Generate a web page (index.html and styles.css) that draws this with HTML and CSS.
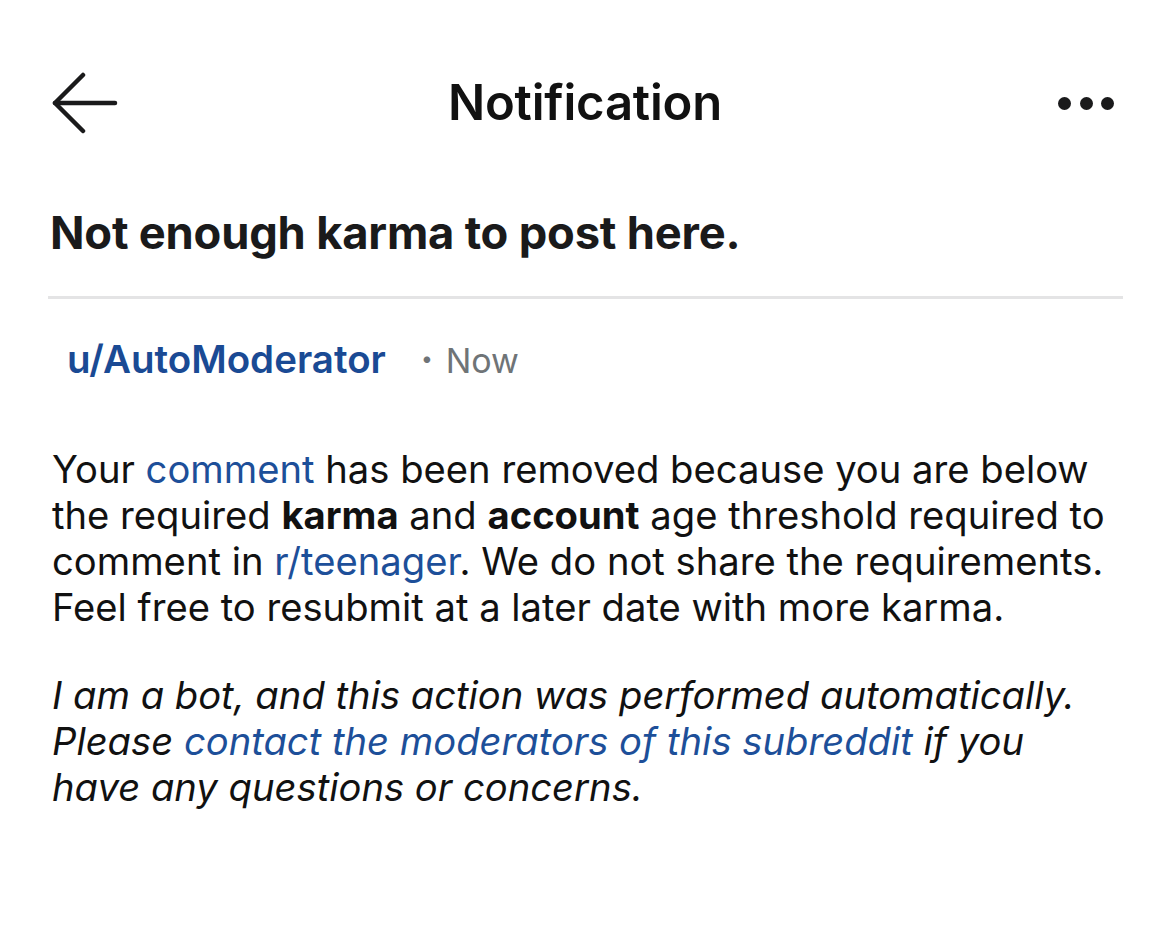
FILE: index.html
```html
<!DOCTYPE html>
<html>
<head>
<meta charset="utf-8">
<link rel="stylesheet" href="styles.css">
</head>
<body>
<div class="page">
  <header class="topbar">
    <button class="icon-btn back" aria-label="Back">
      <svg width="66" height="62" viewBox="0 0 66 62" fill="none" stroke="#1a1a1b" stroke-width="4.5" stroke-linecap="round" stroke-linejoin="round">
        <path d="M31 3 L3 31 L31 59"/>
        <path d="M3 31 H63"/>
      </svg>
    </button>
    <h1 class="title">Notification</h1>
    <button class="icon-btn more" aria-label="More">
      <span class="dot"></span><span class="dot"></span><span class="dot"></span>
    </button>
  </header>
  <h2 class="subject">Not enough karma to post here.</h2>
  <hr class="divider">
  <div class="meta">
    <span class="author">u/AutoModerator</span>
    <span class="sep">•</span>
    <span class="time">Now</span>
  </div>
  <div class="body">
    <p>Your <a class="link">comment</a> has been removed because you are below the required <b>karma</b> and <b>account</b> age threshold required to comment in <a class="link">r/teenager</a>. We do not share the requirements. Feel free to resubmit at a later date with more karma.</p>
    <p class="bot"><em>I am a bot, and this action was performed automatically. Please <a class="link">contact the moderators of this subreddit</a> if you have any questions or concerns.</em></p>
  </div>
</div>
</body>
</html>
```
FILE: styles.css
```css
* { box-sizing: border-box; }
html, body { margin: 0; padding: 0; background: #ffffff; }
body { font-family: Inter, "Noto Sans", "Liberation Sans", sans-serif; color: #111111; width: 1169px; height: 939px; overflow: hidden; }
.page { padding: 0 48px 0 50px; }
.topbar { display: flex; align-items: center; justify-content: space-between; height: 72px; margin-top: 67px; }
.icon-btn { background: none; border: 0; padding: 0; display: flex; align-items: center; cursor: pointer; }
.back { width: 70px; margin-left: 2px; }
.title { margin: 0; font-size: 49px; line-height: 72px; font-weight: 600; letter-spacing: -0.2px; color: #111; flex: 1; text-align: center; }
.more { gap: 8.5px; width: 66px; justify-content: flex-end; margin-right: 7px; }
.dot { width: 13px; height: 13px; border-radius: 50%; background: #1a1a1b; display: block; }
.subject { margin: 65px 0 0; font-size: 45.3px; font-weight: 700; letter-spacing: -0.2px; color: #1a1a1b; line-height: 58px; }
.divider { border: 0; height: 3px; background: #e4e4e5; margin: 34px 0 0 -2px; width: 1075px; }
.meta { display: flex; align-items: baseline; margin: 37px 0 0 17px; font-size: 38.5px; line-height: 46px; }
.author { color: #1a4a94; font-weight: 600; }
.sep { color: #6f7477; font-size: 21px; margin: 0 13px 0 35px; position: relative; top: -7px; }
.time { color: #6f7477; font-weight: 400; font-size: 34px; }
.body { margin-top: 57px; padding-left: 2px; font-size: 38.2px; line-height: 46px; color: #111; }
.body p { margin: 0 0 42px; }
.body b { font-weight: 700; }
.link { color: #1d4f99; text-decoration: none; }
.bot { max-width: 1030px; }
.bot em { font-style: italic; }
```
